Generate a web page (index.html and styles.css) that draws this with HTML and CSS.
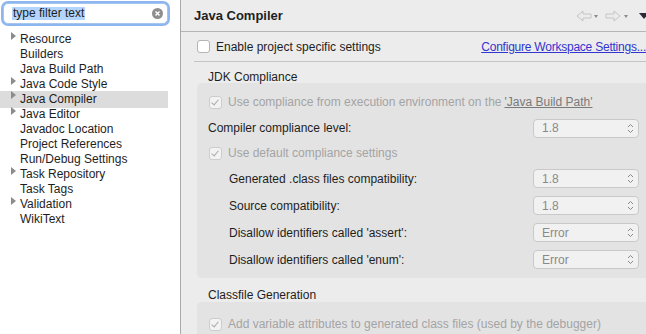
FILE: index.html
```html
<!DOCTYPE html>
<html lang="en">
<head>
    <meta charset="UTF-8">
    <title>Preferences - Java Compiler</title>
    <link rel="stylesheet" href="styles.css">
</head>
<body>
<div class="window">

    <aside class="sidebar">
        <div class="filter">
            <span class="filter-text">type filter text</span>
            <span class="clear">
                <svg width="11" height="11" viewBox="0 0 11 11"><circle cx="5.5" cy="5.5" r="5.5" fill="#8e8e8e"/><path d="M3.5 3.5 L7.5 7.5 M7.5 3.5 L3.5 7.5" stroke="#fff" stroke-width="1.4"/></svg>
            </span>
        </div>
        <ul class="tree">
            <li class="node"><span class="twisty"></span>Resource</li>
            <li class="node"><span class="leaf"></span>Builders</li>
            <li class="node"><span class="leaf"></span>Java Build Path</li>
            <li class="node"><span class="twisty"></span>Java Code Style</li>
            <li class="node selected"><span class="twisty"></span>Java Compiler</li>
            <li class="node"><span class="twisty"></span>Java Editor</li>
            <li class="node"><span class="leaf"></span>Javadoc Location</li>
            <li class="node"><span class="leaf"></span>Project References</li>
            <li class="node"><span class="leaf"></span>Run/Debug Settings</li>
            <li class="node"><span class="twisty"></span>Task Repository</li>
            <li class="node"><span class="leaf"></span>Task Tags</li>
            <li class="node"><span class="twisty"></span>Validation</li>
            <li class="node"><span class="leaf"></span>WikiText</li>
        </ul>
    </aside>

    <main class="page">
        <div class="page-head">
            <h1>Java Compiler</h1>
            <div class="nav">
                <svg width="70" height="12" viewBox="0 0 70 12">
                    <path d="M1 6 L7 1 L7 4 L15 4 L15 8 L7 8 L7 11 Z" fill="none" stroke="#c4c4c4" stroke-width="1"/>
                    <path d="M18 5 L22 5 L20 8 Z" fill="#8a8a8a"/>
                    <path d="M44 6 L38 1 L38 4 L30 4 L30 8 L38 8 L38 11 Z" fill="none" stroke="#c4c4c4" stroke-width="1"/>
                    <path d="M48 5 L52 5 L50 8 Z" fill="#8a8a8a"/>
                    <path d="M63 3 L73 3 L68 9 Z" fill="#2a2a3a"/>
                </svg>
            </div>
        </div>

        <div class="content">
            <div class="enable-row">
                <label class="check"><span class="box"></span>Enable project specific settings</label>
                <a class="link" href="#">Configure Workspace Settings...</a>
            </div>
            <div class="sep"></div>

            <div class="group-title">JDK Compliance</div>
            <div class="group">
                <div class="row">
                    <label class="check off"><span class="box on"></span>Use compliance from execution environment on the <u class="ref">'Java Build Path'</u></label>
                </div>
                <div class="row">
                    <span class="label">Compiler compliance level:</span>
                    <span class="select"><span>1.8</span><svg class="updown" width="7" height="11" viewBox="0 0 7 11"><path d="M1 4 L3.5 1.5 L6 4 M1 7 L3.5 9.5 L6 7" fill="none" stroke="#8a8a8a" stroke-width="1"/></svg></span>
                </div>
                <div class="row short">
                    <label class="check off"><span class="box on"></span>Use default compliance settings</label>
                </div>
                <div class="row tall">
                    <span class="label indent">Generated .class files compatibility:</span>
                    <span class="select"><span>1.8</span><svg class="updown" width="7" height="11" viewBox="0 0 7 11"><path d="M1 4 L3.5 1.5 L6 4 M1 7 L3.5 9.5 L6 7" fill="none" stroke="#8a8a8a" stroke-width="1"/></svg></span>
                </div>
                <div class="row tall">
                    <span class="label indent">Source compatibility:</span>
                    <span class="select"><span>1.8</span><svg class="updown" width="7" height="11" viewBox="0 0 7 11"><path d="M1 4 L3.5 1.5 L6 4 M1 7 L3.5 9.5 L6 7" fill="none" stroke="#8a8a8a" stroke-width="1"/></svg></span>
                </div>
                <div class="row tall">
                    <span class="label indent">Disallow identifiers called 'assert':</span>
                    <span class="select"><span>Error</span><svg class="updown" width="7" height="11" viewBox="0 0 7 11"><path d="M1 4 L3.5 1.5 L6 4 M1 7 L3.5 9.5 L6 7" fill="none" stroke="#8a8a8a" stroke-width="1"/></svg></span>
                </div>
                <div class="row tall">
                    <span class="label indent">Disallow identifiers called 'enum':</span>
                    <span class="select"><span>Error</span><svg class="updown" width="7" height="11" viewBox="0 0 7 11"><path d="M1 4 L3.5 1.5 L6 4 M1 7 L3.5 9.5 L6 7" fill="none" stroke="#8a8a8a" stroke-width="1"/></svg></span>
                </div>
            </div>

            <div class="group-title second">Classfile Generation</div>
            <div class="group lower">
                <div class="row">
                    <label class="check off"><span class="box on"></span>Add variable attributes to generated class files (used by the debugger)</label>
                </div>
            </div>
        </div>
    </main>

</div>
</body>
</html>
```

FILE: styles.css
```css
body {
    margin: 0;
    font-family: "Liberation Sans", Arial, sans-serif;
    font-size: 12px;
    color: #1e1e1e;
}
.window {
    display: flex;
    width: 646px;
    height: 334px;
    overflow: hidden;
}

/* left tree */
.sidebar {
    width: 168px;
    padding-right: 12px;
    background-color: white;
    border-right: 1px solid #a9a9a9;
    flex-shrink: 0;
}
.filter {
    display: flex;
    align-items: center;
    justify-content: space-between;
    margin: 3px 0 0 3px;
    height: 15px;
    padding: 2px 4px 2px 8px;
    background: white;
    border: 1px solid #a5c4ee;
    border-radius: 5px;
    box-shadow: 0 0 0 2px #8db6f0;
}
.filter-text {
    background-color: #b3d4fc;
    padding: 0 1px;
    line-height: 13px;
    font-size: 12px;
}
.clear {
    display: flex;
}
.tree {
    list-style: none;
    margin: 8px 0 0 0;
    padding: 0;
}
.node {
    display: flex;
    align-items: flex-start;
    height: 15px;
    line-height: 15px;
    padding-left: 11px;
}
.node.selected {
    background-color: #dcdcdc;
    height: 17px;
    line-height: 17px;
    margin: -1px 0;
}
.twisty {
    width: 0;
    height: 0;
    margin-top: 0;
    margin-right: 4px;
    border-top: 4px solid transparent;
    border-bottom: 4px solid transparent;
    border-left: 5px solid #8c8c8c;
}
.leaf {
    width: 5px;
    margin-right: 4px;
}

/* right page */
.page {
    flex: 1;
    background-color: #ececec;
    overflow: hidden;
}
.page-head {
    display: flex;
    align-items: center;
    justify-content: space-between;
    height: 31px;
    border-bottom: 1px solid #b5b5b5;
}
.page-head h1 {
    margin: 0 0 0 13px;
    font-size: 13px;
    font-weight: bold;
}
.nav {
    display: flex;
    padding-top: 1px;
}
.content {
    width: 465px;
}
.enable-row {
    display: flex;
    align-items: center;
    justify-content: space-between;
    height: 29px;
    padding-left: 16px;
}
.link {
    color: #3434d0;
    text-decoration: underline;
    letter-spacing: -0.23px;
}
.sep {
    margin-left: 13px;
    border-top: 1px solid #c4c4c4;
}
.check {
    display: flex;
    align-items: center;
}
.check.off {
    color: #a4a4a4;
    margin-left: 1px;
}
.ref {
    color: #7a7a7a;
    margin-left: 3px;
}
.box {
    width: 11px;
    height: 11px;
    margin-right: 6px;
    background: white;
    border: 1px solid #b4b4b4;
    border-radius: 3px;
}
.box.on {
    background: #f3f3f3;
    border-color: #cdcdcd;
    position: relative;
}
.box.on::after {
    content: "";
    position: absolute;
    left: 3px;
    top: 1px;
    width: 3px;
    height: 6px;
    border-right: 1.5px solid #a9a9a9;
    border-bottom: 1.5px solid #a9a9a9;
    transform: rotate(40deg);
}
.group-title {
    padding: 8px 0 0 27px;
    height: 13px;
    line-height: 15px;
}
.group-title.second {
    padding-top: 10px;
    height: 14px;
}
.group {
    margin-left: 16px;
    padding: 6px 7px 5px 11px;
    background-color: #e3e3e3;
    border-radius: 5px 0 0 5px;
}
.group.lower {
    padding-top: 9px;
}
.row {
    display: flex;
    align-items: center;
    justify-content: space-between;
    height: 26px;
}
.row.short {
    height: 24px;
}
.row.tall {
    height: 27px;
}
.label.indent {
    margin-left: 21px;
}
.select {
    display: flex;
    align-items: center;
    justify-content: space-between;
    width: 92px;
    height: 17px;
    padding: 0 4px 0 8px;
    background-color: #f1f1f1;
    border: 1px solid #c9c9c9;
    border-radius: 4px;
    color: #8a8a8a;
    font-size: 12px;
}
.updown {
    display: block;
}
```
